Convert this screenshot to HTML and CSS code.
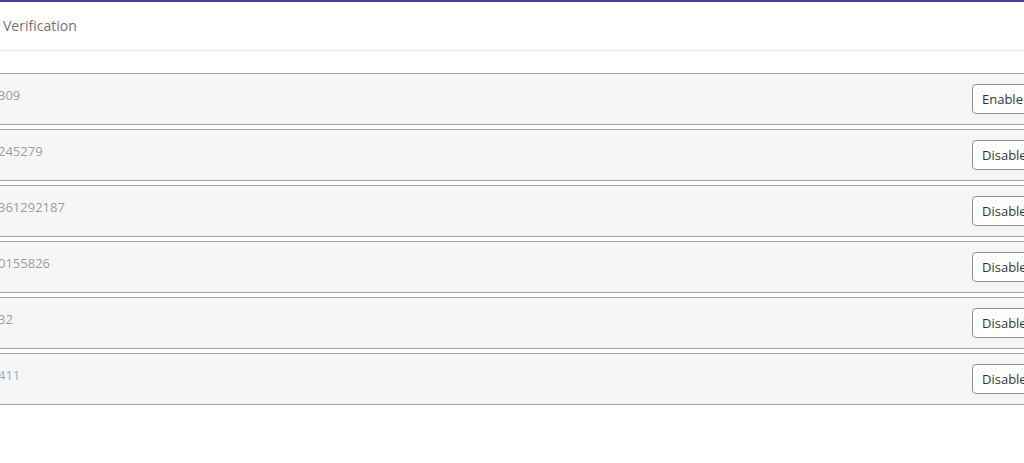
FILE: index.html
```html
<!DOCTYPE html>
<html lang="en">
<head>
  <meta charset="UTF-8">
  <meta name="viewport" content="width=device-width, initial-scale=1">
  <title>Verification</title>
  <link rel="stylesheet" href="styles.css">
</head>
<body>
  <div class="frame">
    <main class="page">
      <header class="page-head">
        <h1>Verification</h1>
      </header>

      <ul class="numbers">
        <li class="number-row">
          <span class="number">309</span>
          <button type="button">Enable</button>
        </li>
        <li class="number-row">
          <span class="number">245279</span>
          <button type="button">Disable</button>
        </li>
        <li class="number-row">
          <span class="number">361292187</span>
          <button type="button">Disable</button>
        </li>
        <li class="number-row">
          <span class="number">0155826</span>
          <button type="button">Disable</button>
        </li>
        <li class="number-row">
          <span class="number">32</span>
          <button type="button">Disable</button>
        </li>
        <li class="number-row">
          <span class="number number-link">411</span>
          <button type="button">Disable</button>
        </li>
      </ul>
    </main>
  </div>
</body>
</html>
```

FILE: styles.css
```css
:root {
  --accent: #4d3ca7;
  --gray-100: #f6f6f6;
  --gray-200: #e8e8e8;
  --gray-400: #a2a2a2;
  --gray-500: #a09d9d;
  --gray-600: #767373;
  --text: #333;
  font-family: 'Open Sans', 'Noto Sans', sans-serif;
  color: var(--text);
}

body {
  margin: 0;
  background: #fff;
  overflow: hidden;
}

.frame {
  border-top: 2px solid var(--accent);
  overflow: hidden;
}

.page {
  width: 1072px;
  margin-left: -20px;
}

.page-head {
  padding: 14px 0 14px 23px;
  border-bottom: 1px solid var(--gray-200);
}

h1 {
  margin: 0;
  font-size: 14px;
  font-weight: 400;
  line-height: 20px;
  color: var(--gray-600);
}

.numbers {
  list-style: none;
  margin: 22px 0 0;
  padding: 0;
}

.number-row {
  display: flex;
  justify-content: space-between;
  align-items: flex-start;
  padding: 10px 10px 10px 18px;
  margin-bottom: 4px;
  background: var(--gray-100);
  border-top: 1px solid var(--gray-400);
  border-bottom: 1px solid var(--gray-400);
}

.number {
  padding-top: 2px;
  font-size: 13px;
  line-height: 18px;
  color: var(--gray-500);
}

.number-link {
  color: #93acd3;
}

button {
  width: 70px;
  height: 30px;
  padding: 0 9px;
  text-align: left;
  font-family: inherit;
  font-size: 13px;
  color: var(--text);
  background: #fff;
  border: 1px solid #8f8f8f;
  border-radius: 4px;
  cursor: pointer;
}
```
